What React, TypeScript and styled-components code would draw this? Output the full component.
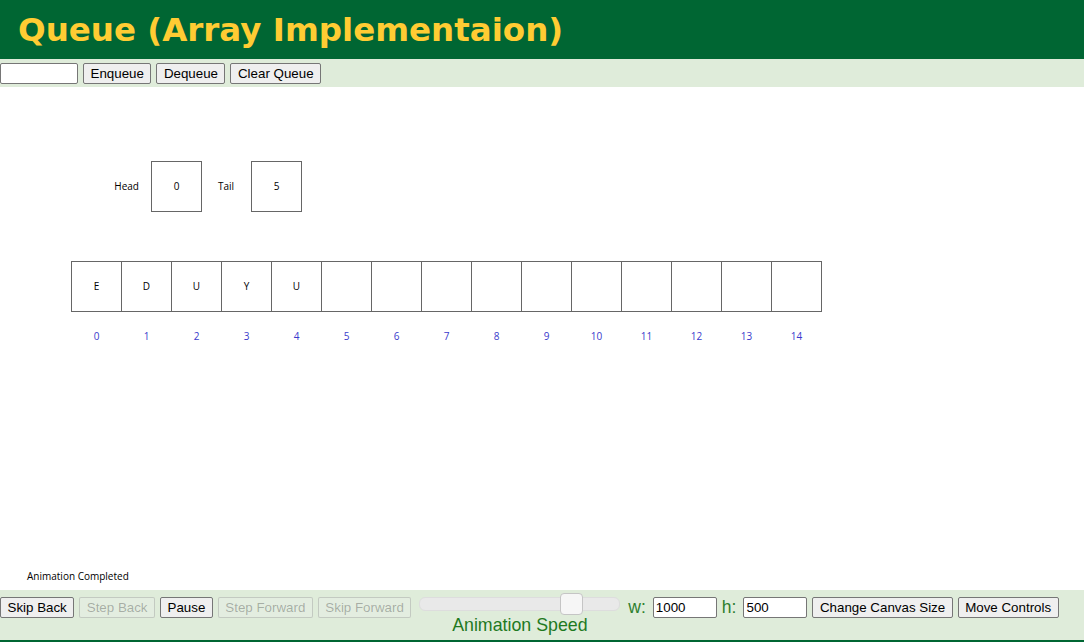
import React from "react";
import styled, { createGlobalStyle } from "styled-components";

const GlobalStyle = createGlobalStyle`
  html, body {
    margin: 0;
    padding: 0;
    background: #ffffff;
  }
  body {
    font-family: "Liberation Sans", Arial, sans-serif;
    overflow: hidden;
  }
`;

const queueItems = ["E", "D", "U", "Y", "U"];
const ARRAY_SIZE = 15;
const CELL = 50;
const ARRAY_X = 71.5;
const ARRAY_Y = 174.5;

export default function App() {
  return (
    <Page>
      <GlobalStyle />
      <Header>
        <Title>Queue (Array Implementaion)</Title>
      </Header>
      <Toolbar>
        <TextInput width={78} />
        <Button>Enqueue</Button>
        <Button>Dequeue</Button>
        <Button>Clear Queue</Button>
      </Toolbar>

      <CanvasArea>
        <svg width="1084" height="503" viewBox="0 0 1084 503">
          <g fontFamily="'Open Sans', 'Noto Sans', sans-serif" fontSize="10" fill="#000">
            <text x="139" y="100" textAnchor="end" dominantBaseline="middle">
              Head
            </text>
            <rect x="151.5" y="74.5" width="50" height="50" fill="none" stroke="#666" />
            <text x="176.5" y="100" textAnchor="middle" dominantBaseline="middle">
              0
            </text>
            <text x="234" y="100" textAnchor="end" dominantBaseline="middle">
              Tail
            </text>
            <rect x="251.5" y="74.5" width="50" height="50" fill="none" stroke="#666" />
            <text x="276.5" y="100" textAnchor="middle" dominantBaseline="middle">
              5
            </text>

            {Array.from({ length: ARRAY_SIZE }).map((_, i) => (
              <g key={i}>
                <rect
                  x={ARRAY_X + i * CELL}
                  y={ARRAY_Y}
                  width={CELL}
                  height={CELL}
                  fill="none"
                  stroke="#666"
                />
                {queueItems[i] && (
                  <text
                    x={ARRAY_X + i * CELL + 25}
                    y={ARRAY_Y + 26}
                    textAnchor="middle"
                    dominantBaseline="middle"
                  >
                    {queueItems[i]}
                  </text>
                )}
                <text
                  x={ARRAY_X + i * CELL + 25}
                  y={250}
                  textAnchor="middle"
                  dominantBaseline="middle"
                  fill="#3a3acc"
                >
                  {i}
                </text>
              </g>
            ))}

            <text x="27" y="490" dominantBaseline="middle">
              Animation Completed
            </text>
          </g>
        </svg>
      </CanvasArea>

      <Controls>
        <Button>Skip Back</Button>
        <Button disabled>Step Back</Button>
        <Button>Pause</Button>
        <Button disabled>Step Forward</Button>
        <Button disabled>Skip Forward</Button>
        <SpeedGroup>
          <Track>
            <Thumb />
          </Track>
          <SpeedLabel>Animation Speed</SpeedLabel>
        </SpeedGroup>
        <SizeLabel>w:</SizeLabel>
        <SizeInput width={64} defaultValue="1000" />
        <SizeLabel>h:</SizeLabel>
        <SizeInput width={64} defaultValue="500" />
        <Button>Change Canvas Size</Button>
        <Button>Move Controls</Button>
      </Controls>
    </Page>
  );
}

const Page = styled.div`
  width: 1084px;
  height: 642px;
  display: flex;
  flex-direction: column;

  & > * {
    flex-shrink: 0;
  }
`;

const Header = styled.div`
  height: 59px;
  background: #006633;
  padding-left: 18px;
  display: flex;
  align-items: center;
  box-sizing: border-box;
`;

const Title = styled.h1`
  margin: 0;
  font-family: "DejaVu Sans", Verdana, sans-serif;
  font-weight: bold;
  font-size: 32.5px;
  color: #ffcc33;
  line-height: 1;
  padding-top: 2px;
`;

const Toolbar = styled.div`
  height: 28px;
  background: #dfecda;
  display: flex;
  align-items: center;
  gap: 5px;
`;

const TextInput = styled.input<{ width: number }>`
  width: ${({ width }) => width}px;
  height: 21px;
  box-sizing: border-box;
  border: 1px solid #767676;
  border-radius: 2px;
  background: #ffffff;
  font-family: "Liberation Sans", Arial, sans-serif;
  font-size: 13.33px;
  padding: 1px 2px;
  margin: 0;
`;

const SizeInput = styled(TextInput)`
  margin-left: 2px;
`;

const Button = styled.button`
  height: 21px;
  box-sizing: border-box;
  padding: 1px 6.5px;
  margin: 0;
  font-family: "Liberation Sans", Arial, sans-serif;
  font-size: 13.33px;
  color: #000000;
  background: #efefef;
  border: 1px solid #767676;
  border-radius: 2px;
  white-space: nowrap;

  &:disabled {
    color: rgba(16, 16, 16, 0.3);
    background: rgba(239, 239, 239, 0.3);
    border-color: rgba(118, 118, 118, 0.3);
  }
`;

const CanvasArea = styled.div`
  height: 503px;
  background: #ffffff;

  svg {
    display: block;
  }
`;

const Controls = styled.div`
  height: 43px;
  background: #dfecda;
  border-bottom: 2px solid #006633;
  display: flex;
  align-items: flex-start;
  gap: 5px;
  padding-top: 7px;
`;

const SpeedGroup = styled.div`
  width: 201px;
  margin: -3px 3px 0 3px;
  display: flex;
  flex-direction: column;
  align-items: center;
`;

const Track = styled.div`
  position: relative;
  width: 201px;
  height: 14px;
  margin-top: 3px;
  box-sizing: border-box;
  background: #e9e9e9;
  border: 1px solid #dddddd;
  border-radius: 6px;
`;

const Thumb = styled.div`
  position: absolute;
  left: 140px;
  top: -5px;
  width: 23px;
  height: 22px;
  box-sizing: border-box;
  background: #f6f6f6;
  border: 1px solid #c5c5c5;
  border-radius: 4px;
`;

const SpeedLabel = styled.div`
  margin-top: 5px;
  font-family: "Liberation Sans", Arial, sans-serif;
  font-size: 17.8px;
  line-height: 18px;
  color: #1f7a1f;
  white-space: nowrap;
`;

const SizeLabel = styled.span`
  font-family: "Liberation Sans", Arial, sans-serif;
  font-size: 17.5px;
  line-height: 20px;
  color: #2f7f2f;
`;
